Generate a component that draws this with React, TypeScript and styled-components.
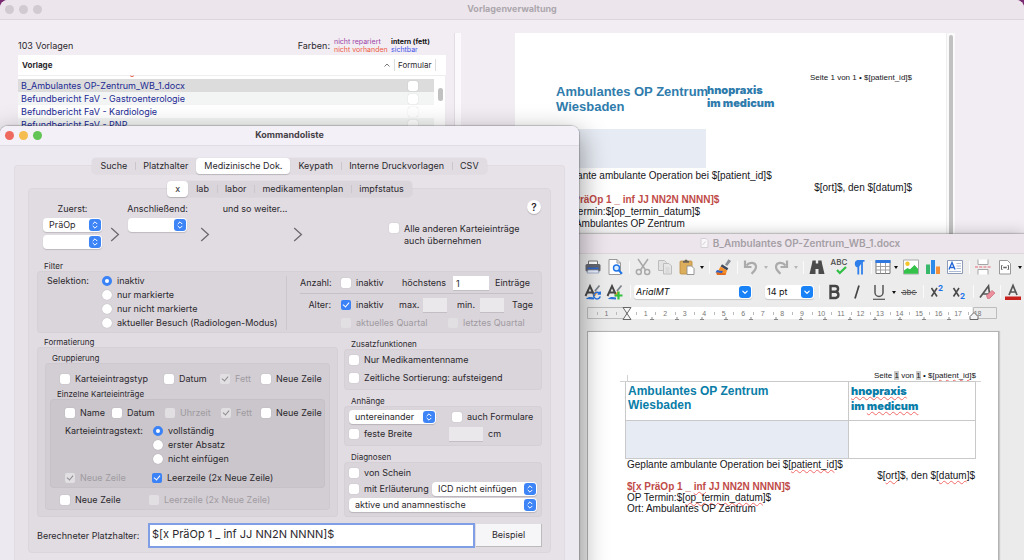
import React from "react";
import styled, { createGlobalStyle, css } from "styled-components";

const UI = '"Inter", "Liberation Sans", sans-serif';
const ARIAL = '"Liberation Sans", Arial, sans-serif';

const GlobalStyle = createGlobalStyle`
  *, *::before, *::after { box-sizing: border-box; }
  body { margin: 0; font: 9px/12px ${UI}; color: #2b282d; }
  h1, h2, h3, p { margin: 0; font: inherit; }
  button, input, select { font: inherit; color: inherit; margin: 0; padding: 0; border: 0; }
`;

/* ---------- Desktop and windows ---------- */

const Desktop = styled.div`
  position: relative;
  height: 100vh;
  overflow: hidden;
  background: #7a2a70;
`;

const TitleBar = styled.header<{ $tone: string; $line: string }>`
  display: grid;
  grid-template-columns: 1fr auto 1fr;
  align-items: center;
  height: 20px;
  padding: 0 5px 1px;
  background: ${(p) => p.$tone};
  border-bottom: 1px solid ${(p) => p.$line};
`;

const Lights = styled.div`
  display: flex;
  gap: 5px;
`;

const Light = styled.button<{ $color: string }>`
  width: 9px;
  height: 9px;
  border-radius: 50%;
  background: ${(p) => p.$color};
`;

const WindowTitle = styled.h1<{ $color: string; $large?: boolean }>`
  display: flex;
  align-items: center;
  gap: 4px;
  font-weight: ${(p) => (p.$large ? 600 : 700)};
  font-size: ${(p) => (p.$large ? 10 : 9)}px;
  white-space: nowrap;
  color: ${(p) => p.$color};
`;

/* ---------- Template manager ---------- */

const ManagerWindow = styled.main`
  display: flex;
  flex-direction: column;
  height: 100%;
  background: #f2edf3;
  border-radius: 8px 8px 0 0;
  overflow: hidden;
`;

const ManagerBody = styled.div`
  flex: 1;
  display: grid;
  grid-template-columns: 428px 7px 1fr;
  column-gap: 8px;
  padding: 13px 69px 0 18px;
`;

const Splitter = styled.div`
  background: #fbf9fb;
  border-left: 1px solid #e2dde3;
`;

const ListPane = styled.section`
  padding-top: 3px;
`;

const ListHead = styled.div`
  display: flex;
  align-items: center;
  height: 19px;
`;

const Legend = styled.div`
  display: grid;
  grid-template-columns: 57px 55px;
  margin-left: 4px;
  font-size: 7px;
  line-height: 8px;
`;

const LegendHint = styled.span<{ $color: string; $bold?: boolean }>`
  color: ${(p) => p.$color};
  font-weight: ${(p) => (p.$bold ? 700 : 400)};
  white-space: nowrap;
`;

const Push = styled.span`
  margin-left: auto;
`;

const TemplateTable = styled.table`
  display: block;
  background: #fff;
  thead, tbody { display: block; }
  thead { border-bottom: 1px solid #eee; }
  tr { display: grid; grid-template-columns: 1fr 42px; align-items: center; }
  th, td { padding: 0; text-align: left; font-weight: 400; }
  thead tr { height: 20px; padding-right: 10px; }
  tbody { position: relative; padding: 3px 11px 0 0; border-right: 1px solid #eee; }
`;

const SortHead = styled.th`
  display: flex;
  justify-content: space-between;
  align-items: center;
  && { padding: 0 4px; font-weight: 700; font-size: 8px; }
`;

const FormHead = styled.th`
  && { padding-left: 3px; font-size: 8px; }
  border-left: 1px solid #ddd;
  border-right: 1px solid #ddd;
`;

const TemplateRow = styled.tr<{ $bg: string }>`
  height: 13px;
  background: ${(p) => p.$bg};
  color: #1c2a94;
  white-space: nowrap;
  td:first-child { padding-left: 3px; }
  td:last-child { display: flex; justify-content: center; }
`;

const ListThumb = styled.tr`
  && { display: block; }
  position: absolute;
  right: 2px;
  top: 12px;
  width: 5px;
  height: 13px;
  border-radius: 3px;
  background: #c1c1c1;
`;

const ScrolledOff = styled.tr`
  && { display: block; }
  position: absolute;
  left: 112px;
  top: -1px;
  width: 4px;
  height: 2px;
  border-bottom: 1px solid #e8503c;
  border-radius: 0 0 2px 2px;
`;

const PreviewPane = styled.section`
  display: grid;
  grid-template-columns: 1fr 9px;
  margin-left: 46px;
`;

const PreviewPage = styled.article`
  padding: 39px 34px 0 41px;
  background: #fff;
  font: 10px/12px ${ARIAL};
  color: #16161a;
  white-space: nowrap;
`;

const ScrollTrack = styled.div`
  padding: 2px 2px 0;
  background: #fafafa;
  border-left: 1px solid #eee;
  &::before { content: ""; display: block; height: 100%; border-radius: 3px; background: #c1c1c1; }
`;

const PageNo = styled.p`
  text-align: right;
  font-size: 8px;
`;

const PreviewBrand = styled.div`
  display: grid;
  grid-template-columns: 151px 1fr;
  height: 45px;
`;

const Clinic = styled.h2<{ $color: string; $size: number; $lead: number }>`
  font: 700 ${(p) => p.$size}px/${(p) => p.$lead}px ${ARIAL};
  color: ${(p) => p.$color};
`;

const Practice = styled.h2<{ $color: string; $lead: number }>`
  font: 900 11px/${(p) => p.$lead}px ${UI};
  color: ${(p) => p.$color};
`;

const PreviewBox = styled.div`
  width: 150px;
  height: 39px;
  margin-bottom: 2px;
  background: #e7ebf3;
`;

const RightLine = styled.p`
  text-align: right;
`;

const RedLine = styled.p`
  font-weight: 700;
  color: #bf4b48;
`;

/* ---------- Command list dialog ---------- */

const Dialog = styled.section`
  position: absolute;
  left: 0;
  top: 126px;
  z-index: 3;
  width: 579px;
  background: #ece9f0;
  border-radius: 8px;
  overflow: hidden;
`;

const DialogShadow = styled.div`
  position: absolute;
  left: 0;
  top: 126px;
  z-index: 2;
  width: 579px;
  bottom: -20px;
  border-radius: 8px;
  box-shadow: 0 0 1px 1px rgba(0, 0, 0, 0.2), 0 10px 26px 4px rgba(0, 0, 0, 0.34);
`;

const DialogBody = styled.div`
  padding: 12px 14px 20px;
`;

const TabBar = styled.nav<{ $bg: string }>`
  position: relative;
  display: flex;
  width: max-content;
  height: 16px;
  margin: 0 auto -9px;
  border-radius: 4px;
  background: ${(p) => p.$bg};
  box-shadow: 0 0 0 1px rgba(0, 0, 0, 0.02);
`;

const Tab = styled.button<{ $active?: boolean }>`
  position: relative;
  padding: 0 8px;
  background: none;
  border-radius: 4px;
  white-space: nowrap;
  & + &::before {
    content: "";
    position: absolute;
    left: 0;
    top: 4px;
    width: 1px;
    height: 8px;
    background: #cbc6cd;
  }
  ${(p) =>
    p.$active &&
    css`
      background: #fff;
      box-shadow: 0 1px 1px rgba(0, 0, 0, 0.18);
      z-index: 1;
      &&::before { display: none; }
      & + button::before { display: none; }
    `}
`;

const OuterPanel = styled.div`
  padding: 16px 14px 20px;
  background: #e6e2e8;
  border-radius: 4px;
  box-shadow: inset 0 0 0 1px #e0dce2;
`;

const InnerPanel = styled.div`
  padding: 11px 8px 4px;
  background: #e1dce2;
  border: 1px solid #dbd6dc;
  border-radius: 4px;
`;

const Chain = styled.div`
  display: grid;
  grid-template-columns: 59px 26px 59px 36px 64px 22px 1fr;
  height: 50px;
  margin-bottom: 11px;
  padding-left: 6px;
`;

const ChainStep = styled.div`
  display: flex;
  flex-direction: column;
  align-items: center;
  gap: 3px;
  padding-top: 3px;
  white-space: nowrap;
`;

const ChainArrow = styled.svg`
  justify-self: center;
  margin-top: 27px;
  fill: none;
  stroke: #6d6a70;
`;

const ChainSide = styled.div`
  display: flex;
  flex-direction: column;
  gap: 9px;
  padding-left: 80px;
`;

const HelpButton = styled.button`
  align-self: flex-end;
  width: 14px;
  height: 14px;
  margin-right: 1px;
  border-radius: 50%;
  background: #fff;
  font-weight: 600;
  font-size: 10px;
  box-shadow: 0 1px 1px rgba(0, 0, 0, 0.2);
`;

const SelectWrap = styled.span<{ $w: string }>`
  position: relative;
  display: block;
  width: ${(p) => p.$w};
  height: 14px;
  svg { position: absolute; right: 1px; top: 1px; pointer-events: none; }
`;

const SelectBox = styled.select`
  appearance: none;
  display: block;
  width: 100%;
  height: 14px;
  padding: 0 14px 0 6px;
  border-radius: 4px;
  background: #fff;
  box-shadow: 0 1px 1px rgba(0, 0, 0, 0.16);
`;

const Check = styled.label<{ $off?: boolean; $top?: boolean }>`
  display: flex;
  align-items: ${(p) => (p.$top ? "flex-start" : "center")};
  gap: 5px;
  min-height: 14px;
  white-space: nowrap;
  color: ${(p) => (p.$off ? "#9f9ba1" : "inherit")};
`;

const Tick = styled.input`
  appearance: none;
  position: relative;
  flex: none;
  width: 10px;
  height: 10px;
  border-radius: 2px;
  background: #fff;
  box-shadow: 0 0 1px rgba(0, 0, 0, 0.25);
  &:disabled { background: #e2dfe3; box-shadow: none; }
  &:checked:not(:disabled) { background: #3b82f6; box-shadow: none; }
  &:checked::before {
    content: "";
    position: absolute;
    left: 3px;
    top: 1px;
    width: 4px;
    height: 6px;
    border: solid #fff;
    border-width: 0 1px 1px 0;
    transform: rotate(40deg);
  }
  &:checked:disabled::before { border-color: #8f8b91; }
`;

const Dot = styled.input`
  appearance: none;
  flex: none;
  width: 10px;
  height: 10px;
  border-radius: 50%;
  background: #fff;
  box-shadow: 0 0 1px rgba(0, 0, 0, 0.3);
  &:checked { border: 3px solid #3b82f6; box-shadow: none; }
`;

const GroupTitle = styled.h3`
  padding-left: 7px;
  font-size: 8px;
  line-height: 10px;
`;

const Caption = styled(GroupTitle)`
  margin-top: 3px;
`;

const Box = styled.div<{ $bg: string; $pad: string; $gap?: number }>`
  display: flex;
  flex-direction: column;
  gap: ${(p) => p.$gap || 0}px;
  padding: ${(p) => p.$pad};
  background: ${(p) => p.$bg};
  border-radius: 4px;
  box-shadow: inset 0 0 0 1px rgba(90, 70, 90, 0.04);
`;

const FilterBox = styled.div`
  display: grid;
  grid-template-columns: 55px 184px 1fr;
  height: 62px;
  padding: 3px 10px;
  margin-bottom: 4px;
  background: #dad5db;
  border-radius: 4px;
  box-shadow: inset 0 0 0 1px rgba(90, 70, 90, 0.04);
`;

const FieldName = styled.span<{ $right?: boolean }>`
  line-height: 14px;
  white-space: nowrap;
  text-align: ${(p) => (p.$right ? "right" : "left")};
`;

const LimitBlock = styled.div`
  display: flex;
  flex-direction: column;
  margin: 2px 0;
  padding-left: 13px;
  border-left: 1px solid #cbc6cc;
`;

const LimitRow = styled.div<{ $cols: string }>`
  display: grid;
  grid-template-columns: ${(p) => p.$cols};
  align-items: center;
  height: 14px;
  white-space: nowrap;
`;

const Rule = styled.hr`
  width: 100%;
  height: 1px;
  margin: 3px 0 4px;
  border: 0;
  background: #c6c1c7;
`;

const NumberInput = styled.input<{ $w: number }>`
  width: ${(p) => p.$w}px;
  height: 14px;
  && { padding: 0 3px; }
  background: #fff;
  border-radius: 0;
  box-shadow: 0 1px 0 #c3bec4;
  &:disabled { background: #ebe8ec; }
`;

const Columns = styled.div`
  display: grid;
  grid-template-columns: 301px 1fr;
  column-gap: 6px;
`;

const SideColumn = styled.div`
  display: flex;
  flex-direction: column;
  gap: 6px;
  padding-top: 2px;
`;

const CellRow = styled.div<{ $cols: string; $mt?: number }>`
  display: grid;
  grid-template-columns: ${(p) => p.$cols};
  align-items: center;
  min-height: 14px;
  margin-top: ${(p) => p.$mt || 0}px;
`;

const QuarterCell = styled.div`
  padding-left: 41px;
`;

const Indent = styled.div`
  padding-left: 10px;
`;

const TopCell = styled.span`
  align-self: start;
  line-height: 14px;
  white-space: nowrap;
`;

const Stack = styled.div`
  display: flex;
  flex-direction: column;
`;

const ResultRow = styled.div`
  display: grid;
  grid-template-columns: 111px 1fr 67px;
  align-items: center;
  height: 25px;
  margin-top: 6px;
  label { white-space: nowrap; }
`;

const ResultInput = styled.input`
  width: 100%;
  height: 25px;
  && { border: 2px solid #7f9ee6; padding: 0 2px 4px; font-size: 11px; }
  background: #fff;
  outline: none;
`;

const SampleButton = styled.button`
  height: 23px;
  margin-left: 1px;
  background: #f6f5f7;
  && { border-right: 1px solid #bbb; border-bottom: 1px solid #bbb; }
`;

/* ---------- Word processor ---------- */

const WriterWindow = styled.section`
  position: absolute;
  left: 576px;
  right: 0;
  top: 234px;
  bottom: 0;
  z-index: 1;
  display: flex;
  flex-direction: column;
  background: #ebebeb;
  box-shadow: 0 0 1px 1px rgba(0, 0, 0, 0.16), 0 0 14px rgba(0, 0, 0, 0.24);
`;

const Toolbar = styled.div<{ $h: number }>`
  display: flex;
  align-items: center;
  flex: none;
  height: ${(p) => p.$h}px;
  padding-left: 6px;
  background: #ececec;
`;

const Tool = styled.button<{ $w?: number }>`
  display: flex;
  align-items: center;
  justify-content: center;
  flex: none;
  width: ${(p) => p.$w || 22}px;
  height: 22px;
  background: none;
`;

const Sep = styled.span<{ $w?: number }>`
  flex: none;
  width: ${(p) => p.$w || 6}px;
  height: 13px;
  background: linear-gradient(#fafafa, #fafafa) center / 1px 100% no-repeat;
`;

const CaretButton = styled.button<{ $soft?: boolean }>`
  flex: none;
  width: 8px;
  height: 12px;
  background: none;
  &::before {
    content: "";
    display: block;
    width: 0;
    margin: 1px auto 0;
    border: solid transparent;
    border-width: 3px 2px 0;
    border-top-color: ${(p) => (p.$soft ? "#b5b5b5" : "#111")};
  }
`;

const ComboGroup = styled.div`
  display: flex;
  flex: none;
  gap: 13px;
`;

const Combo = styled.span<{ $w: number; $italic?: boolean }>`
  position: relative;
  flex: none;
  width: ${(p) => p.$w}px;
  font-style: ${(p) => (p.$italic ? "italic" : "normal")};
  svg { position: absolute; right: 1px; top: 1px; pointer-events: none; }
  select {
    appearance: none;
    display: block;
    width: 100%;
    height: 14px;
    padding-left: 2px;
    border-radius: 3px;
    background: #fff;
    color: #111;
    box-shadow: 0 1px 1px rgba(0, 0, 0, 0.16);
  }
`;

const RulerBar = styled.div`
  position: relative;
  display: flex;
  align-items: center;
  flex: none;
  height: 12px;
  margin: 4px 27px 0 11px;
  font: 7px/9px ${ARIAL};
  color: #777;
  background: linear-gradient(90deg, #ececec 0 10%, #fff 10% 94%, #ececec 94%);
  svg { position: absolute; left: 0; top: 0; }
`;

const RulerCell = styled.span<{ $half?: boolean }>`
  flex: ${(p) => (p.$half ? 1 : 2)};
  display: grid;
  grid-template-columns: 1fr auto 1fr;
  align-items: center;
  ${(p) => !p.$half && css`&::before { content: ""; width: 1px; height: 3px; background: #bbb; }`}
`;

const Canvas = styled.div`
  flex: 1;
  display: flex;
  padding: 12px 25px 0 11px;
`;

const Paper = styled.article`
  flex: 1;
  padding: 38px 22px 0 37px;
  background: #fff;
  border: solid #b3b3b3;
  border-width: 1px 1px 0;
  box-shadow: 1px 0 1px rgba(0, 0, 0, 0.15);
  font: 10px/11px ${ARIAL};
  color: #16161a;
  white-space: nowrap;
`;

const LetterGrid = styled.div`
  position: relative;
  display: grid;
  grid-template-columns: 222px 1fr;
  grid-template-rows: 38px 37px;
  gap: 1px;
  padding: 1px;
  background: #c9c9c9;
  &::before {
    content: "";
    position: absolute;
    left: -5px;
    top: -6px;
    width: 8px;
    height: 7px;
    border: solid #d2d2d2;
    border-width: 0 1px 1px 0;
  }
  &::after {
    content: "";
    position: absolute;
    right: -5px;
    top: 0;
    width: 5px;
    height: 1px;
    background: #d2d2d2;
  }
`;

const LetterCell = styled.div<{ $fill?: boolean }>`
  padding: 2px;
  background: ${(p) => (p.$fill ? "#e7ebf4" : "#fff")};
`;

const PaperText = styled.div`
  padding: 0 1px 0 2px;
`;

const Wavy = styled.span`
  text-decoration: underline wavy #f26a6a 1px;
  text-underline-offset: 1px;
  text-decoration-skip-ink: none;
`;

const FieldMark = styled.span`
  background: #c8c8c8;
`;

/* ---------- Small pieces ---------- */

const Picker = ({ value, w, label }: { value: string; w: string; label: string }) => (
  <SelectWrap $w={w}>
    <SelectBox aria-label={label} defaultValue={value}>
      <option value={value}>{value}</option>
    </SelectBox>
    <svg width="12" height="12" viewBox="0 0 12 12" fill="none" stroke="#fff" strokeLinecap="round" strokeLinejoin="round">
      <rect width="12" height="12" rx="3" fill="#3d84f7" stroke="none" />
      <path d="M4 4.8 6 2.8l2 2M4 7.2l2 2 2-2" />
    </svg>
  </SelectWrap>
);

const ComboBox = ({ value, w, italic, label }: { value: string; w: number; italic?: boolean; label: string }) => (
  <Combo $w={w} $italic={italic}>
    <select aria-label={label} defaultValue={value}>
      <option value={value}>{value}</option>
    </select>
    <svg width="12" height="12" viewBox="0 0 12 12" fill="none" stroke="#fff" strokeLinecap="round" strokeLinejoin="round">
      <rect width="12" height="12" rx="3" fill="#1a82f7" stroke="none" />
      <path d="m3.8 5.2 2.2 2.2 2.2-2.2" strokeWidth="1.2" />
    </svg>
  </Combo>
);

const CheckField = ({ text, on, off }: { text: string; on?: boolean; off?: boolean }) => (
  <Check $off={off}>
    <Tick type="checkbox" defaultChecked={on} disabled={off} />
    {text}
  </Check>
);

const RadioField = ({ text, group, on }: { text: string; group: string; on?: boolean }) => (
  <Check>
    <Dot type="radio" name={group} defaultChecked={on} />
    {text}
  </Check>
);

const Arrow = () => (
  <ChainArrow width="10" height="15" viewBox="0 0 10 15" strokeWidth="1.3">
    <path d="M1.2 1 8.4 7.5 1.2 14" />
  </ChainArrow>
);

const icon = { width: 18, height: 18, viewBox: "0 0 18 18", fill: "none" };

const PrinterIcon = () => (
  <svg {...icon}>
    <path d="M4.5 3h9v4h-9z" fill="#fff" stroke="#777" />
    <rect x="1.5" y="6" width="15" height="7.5" rx="1.5" fill="#63666d" />
    <path d="M3.5 9.5h11V11h-11z" fill="#2f66d0" />
    <path d="M4 12h10l1 3H3z" fill="#e8eefc" stroke="#8795b5" strokeWidth=".7" />
  </svg>
);
const PreviewIcon = () => (
  <svg {...icon}>
    <path d="M3 1.5h8l3.500 3.500v11.500H3z" fill="#fff" stroke="#999" />
    <path d="M11 1.500V5h3.500" stroke="#999" />
    <circle cx="10.500" cy="10" r="3" fill="#dcecff" stroke="#1d74e8" strokeWidth="1.4" />
    <path d="m12.800 12.400 3.200 3.400" stroke="#1d74e8" strokeWidth="2" />
  </svg>
);
const CutIcon = () => (
  <svg {...icon} stroke="#a9a9a9" strokeWidth="1.5">
    <path d="M4 1 11.500 12M14 1 6.500 12" />
    <circle cx="4.800" cy="14" r="2.500" />
    <circle cx="13.200" cy="14" r="2.500" />
  </svg>
);
const CopyIcon = () => (
  <svg {...icon} stroke="#bcbcbc">
    <path d="M2.500 2.500h6l2 2v8h-8z" fill="#e2e2e2" />
    <path d="M7.500 5.500h5.500l2.500 2.500v8h-8z" fill="#e6e6e6" />
    <path d="M9.500 10h4M9.500 12h4M9.500 14h4" stroke="#cfcfcf" />
  </svg>
);
const PasteIcon = () => (
  <svg {...icon}>
    <rect x="2" y="3" width="12" height="13" rx="1" fill="#dcae5c" stroke="#b98a3c" strokeWidth=".8" />
    <path d="M5 4.800V3h1.500a1.500 1.500 0 0 1 3 0H11v1.800z" fill="#6b6358" />
    <path d="M9 8h4.500L16 10.500v6H9z" fill="#fff" stroke="#8d8d8d" strokeWidth=".9" />
  </svg>
);
const BrushIcon = () => (
  <svg {...icon}>
    <path d="m11 6.500 3.500-5.200 2.500 1.800-3.800 5z" fill="#8a8f98" />
    <path d="m8 6.300 6.300 4-1.300 2.200-6.400-4z" fill="#3f4a5e" />
    <path d="m6.600 8.500 6.400 4-1.200 4-9-1.500z" fill="#f4902c" />
    <path d="M3 12c2 .5 4 1 6 1l-1 2-6.500-.5z" fill="#2c61c9" />
    <path d="m2 14.500 10 1-.5 1.500H3z" fill="#e06a1e" />
  </svg>
);
const UndoIcon = ({ flip }: { flip?: boolean }) => (
  <svg {...icon} stroke="#ababab" strokeWidth="2.200">
    <g transform={flip ? "matrix(-1 0 0 1 18 0)" : undefined}>
      <path d="M4.500 7.500c3-4 9-3.500 9.500 1 .3 3-2 5-4.500 7.300" />
      <path d="M3 2.500v6.500h6.500" />
    </g>
  </svg>
);
const FindIcon = () => (
  <svg {...icon} fill="#4b4b4b">
    <path d="M4.500 2.500h3.300v3h2.400v-3h3.300l.5 3L16.500 16h-6v-5h-3v5h-6L4 5.500z" />
  </svg>
);
const SpellIcon = () => (
  <svg {...icon} overflow="visible">
    <text x="9" y="7" textAnchor="middle" fontFamily="Inter, sans-serif" fontSize="8" fontWeight="500" fill="#4a4a4a">ABC</text>
    <path d="m7 12 2.800 3L16 9" stroke="#2fbf43" strokeWidth="2.200" />
  </svg>
);
const PilcrowIcon = () => (
  <svg {...icon}>
    <path d="M8.500 9.500a3.700 3.700 0 0 1 0-7.400H14" fill="#2f7fea" />
    <path d="M8.300 2.800v13.700M12 2.800v13.700M7.500 2.800h7" stroke="#2f7fea" strokeWidth="1.800" />
  </svg>
);
const TableIcon = () => (
  <svg {...icon}>
    <path d="M2 2.500h14v13H2z" fill="#fff" stroke="#777" />
    <path d="M1.500 2h15v3h-15z" fill="#2f78e0" />
    <path d="M2 8.500h14M2 12h14M6.500 5v10.500M11.500 5v10.500" stroke="#999" strokeWidth=".9" />
  </svg>
);
const ImageIcon = () => (
  <svg {...icon}>
    <path d="M1.500 2h15v14h-15z" fill="#fff" stroke="#aaa" />
    <circle cx="5.500" cy="5.800" r="2.200" fill="#f6c326" />
    <path d="m2 15.500V13l3.500-2.500 2.500 1L12.500 7l3.500 4v4.500z" fill="#35c24a" />
    <path d="M2 15.500v-3l3.500-2.500 2.500 1.500L12.500 7.500 16 11v4.500z" fill="#35c24a" />
  </svg>
);
const ChartIcon = () => (
  <svg {...icon}>
    <path d="M2 6.500h4V16H2z" fill="#37b86b" />
    <path d="M7 2h4v14H7z" fill="#2f8bea" />
    <path d="M12 8.500h4V16h-4z" fill="#f2913a" />
  </svg>
);
const TextBoxIcon = () => (
  <svg {...icon}>
    <path d="M1.500 2.500h15v13h-15z" fill="#fff" stroke="#8d9db8" />
    <path d="M3 11.500 6 4.500l3 7M4 9.500h4" stroke="#2467d6" strokeWidth="1.400" />
    <path d="M10.500 5.500H15M10.500 8H15M10.500 10.500H15M3 13.500h12" stroke="#98aacb" strokeWidth=".8" />
  </svg>
);
const BreakIcon = () => (
  <svg {...icon} stroke="#a5a5a5">
    <path d="M4 1.500v5h10v-5M4 16.500v-5h10v5" fill="#fff" />
    <path d="M1 9h16" stroke="#e66a76" strokeWidth="1.200" strokeDasharray="3 1.200" />
  </svg>
);
const FieldIcon = () => (
  <svg {...icon} stroke="#999">
    <path d="M3.500 2.500h8l3 3v10.500h-11z" fill="#fff" />
    <path d="M6.500 7.500H5.500v4h1M11.500 7.500h1v4h-1M7.500 9.500h3M8 8.500v2M10 8.500v2" stroke="#666" />
  </svg>
);
const StyleIcon = ({ add }: { add?: boolean }) => (
  <svg {...icon}>
    <path d="M1.500 13 6 3l4.500 10M3.400 9.500h5.200" stroke="#474747" strokeWidth="1.900" />
    <path d="m11 8 4.500-5.500" stroke="#7f858d" strokeWidth="1.800" />
    <path d="M8.500 12.500 11.500 8l2 1.500-2 3z" fill="#ef9a3a" />
    <path d="M2 16c2-2.500 5-2 8-1.500V16.500z" fill="#2c73da" />
    {add ? (
      <path d="M12.500 8.500v8M8.500 12.500h8" stroke="#35c13f" strokeWidth="2.200" />
    ) : (
      <path d="M15.500 10.500a3.300 3.300 0 1 0 .7 2.800M16.200 8.500v2.500h-2.500" stroke="#2374e3" strokeWidth="1.500" />
    )}
  </svg>
);
const BoldIcon = () => (
  <svg {...icon} stroke="#444" strokeWidth="2.400">
    <path d="M4.500 3h4.700a2.800 2.800 0 0 1 0 5.700H4.500zM4.500 8.700h5.300a3.200 3.200 0 0 1 0 6.300H4.500z" />
  </svg>
);
const ItalicIcon = () => (
  <svg {...icon} stroke="#444" strokeWidth="1.700">
    <path d="M11 2.500 7 15.500" />
  </svg>
);
const UnderlineIcon = () => (
  <svg {...icon} stroke="#555">
    <path d="M5 2v7.500a4 4 0 0 0 8 0V2" strokeWidth="1.500" />
    <path d="M3 16.300h12" strokeWidth="1.200" />
  </svg>
);
const StrikeIcon = () => (
  <svg {...icon}>
    <text x="9" y="12" textAnchor="middle" fontFamily="Inter, sans-serif" fontSize="8" fill="#555">abc</text>
    <path d="M1 9.500h16" stroke="#555" />
  </svg>
);
const ScriptIcon = ({ sub }: { sub?: boolean }) => (
  <svg {...icon}>
    <path d="m3.500 5 5.500 8.500M9 5 3.500 13.500" stroke="#4a4a4a" strokeWidth="1.600" />
    <text x="10" y={sub ? 16 : 8} fontFamily="Inter, sans-serif" fontSize="8" fontWeight="700" fill="#1d74e8">2</text>
  </svg>
);
const EraserIcon = () => (
  <svg {...icon}>
    <path d="M2 14.500 10.500 3l1.500 11.500M5 11h6.500" stroke="#555" strokeWidth="1.700" />
    <path d="m8.500 12.500 5.500-5 3 2.500-5.500 5.500h-2z" fill="#ee8f9d" stroke="#c76a78" strokeWidth=".7" />
  </svg>
);
const FontColorIcon = () => (
  <svg {...icon}>
    <path d="M5 12 9 2.500 13 12M6.300 9h5.400" stroke="#555" strokeWidth="1.700" />
    <path d="M1 13.500h16V17H1z" fill="#c9211e" />
  </svg>
);

const tabStops = [65, 90, 115, 139, 164, 189, 214, 238, 263, 288, 313, 337, 362];

const Ruler = () => (
  <RulerBar>
    <RulerCell $half />
    {["1", "", ...Array.from({ length: 18 }, (_, i) => String(i + 1))].map((n, i) => (
      <RulerCell key={i}>
        <span>{n}</span>
      </RulerCell>
    ))}
    <RulerCell $half />
    <svg width="410" height="14" fill="none">
      <path d="M.5 .5h39v11h-39zM386.500 .5h23v11h-23z" stroke="#bdbdbd" />
      <path d="M36 .500h8L36 12.500h8zM383 12.500v-3l4-4 4 4v3z" fill="#f4f4f4" stroke="#666" />
      {tabStops.map((x) => (
        <path key={x} d={`M${x - 2} 12.500h4M${x} 10v2`} stroke="#888" />
      ))}
    </svg>
  </RulerBar>
);

const rows = [
  { name: "B_Ambulantes OP-Zentrum_WB_1.docx", bg: "#dcdcdc" },
  { name: "Befundbericht FaV - Gastroenterologie", bg: "#f3f5f5" },
  { name: "Befundbericht FaV - Kardiologie", bg: "#fff" },
  { name: "Befundbericht FaV - PNP", bg: "#f3f5f5" },
];

const lights = (colors: string[]) => (
  <Lights>
    {colors.map((c, i) => (
      <Light key={i} $color={c} aria-label={["Schließen", "Minimieren", "Vergrößern"][i]} />
    ))}
  </Lights>
);

/* ---------- Screens ---------- */

const Manager = () => (
  <ManagerWindow>
    <TitleBar $tone="#ece6ec" $line="#dcd6dc">
      {lights(["#d1cbd1", "#d1cbd1", "#d1cbd1"])}
      <WindowTitle $color="#aca6ac">Vorlagenverwaltung</WindowTitle>
    </TitleBar>
    <ManagerBody>
      <ListPane>
        <ListHead>
          <span>103 Vorlagen</span>
          <Push>Farben:</Push>
          <Legend>
            <LegendHint $color="#9a3fa5">nicht repariert</LegendHint>
            <LegendHint $color="#111" $bold>intern (fett)</LegendHint>
            <LegendHint $color="#ee5a45">nicht vorhanden</LegendHint>
            <LegendHint $color="#3f55e8">sichtbar</LegendHint>
          </Legend>
        </ListHead>
        <TemplateTable>
          <thead>
            <tr>
              <SortHead>
                Vorlage
                <svg width="6" height="4" viewBox="0 0 6 4" fill="none" stroke="#777">
                  <path d="M.5 3.500 3 1l2.500 2.500" />
                </svg>
              </SortHead>
              <FormHead>Formular</FormHead>
            </tr>
          </thead>
          <tbody>
            {rows.map((r) => (
              <TemplateRow key={r.name} $bg={r.bg}>
                <td>{r.name}</td>
                <td>
                  <Tick type="checkbox" aria-label={r.name} />
                </td>
              </TemplateRow>
            ))}
            <ScrolledOff aria-hidden="true" />
            <ListThumb aria-hidden="true" />
          </tbody>
        </TemplateTable>
      </ListPane>
      <Splitter />
      <PreviewPane>
        <PreviewPage>
          <PageNo>Seite 1 von 1 • $[patient_id]$</PageNo>
          <PreviewBrand>
            <Clinic $color="#2f7cac" $size={13} $lead={15}>
              Ambulantes OP Zentrum
              <br />
              Wiesbaden
            </Clinic>
            <Practice $color="#2f7cac" $lead={13}>
              hnopraxis
              <br />
              im medicum
            </Practice>
          </PreviewBrand>
          <PreviewBox />
          <p>Geplante ambulante Operation bei $[patient_id]$</p>
          <RightLine>$[ort]$, den $[datum]$</RightLine>
          <RedLine>$[x PräOp 1 _ inf JJ NN2N NNNN]$</RedLine>
          <p>OP Termin:$[op_termin_datum]$</p>
          <p>Ort: Ambulantes OP Zentrum</p>
        </PreviewPage>
        <ScrollTrack />
      </PreviewPane>
    </ManagerBody>
  </ManagerWindow>
);

const CommandList = () => (
  <Dialog>
    <TitleBar $tone="#f4f0f7" $line="#e2dee5">
      {lights(["#ee6a5f", "#f5bd4f", "#61c454"])}
      <WindowTitle $color="#454148">Kommandoliste</WindowTitle>
    </TitleBar>
    <DialogBody>
      <TabBar $bg="#e0dce2">
        <Tab>Suche</Tab>
        <Tab>Platzhalter</Tab>
        <Tab $active>Medizinische Dok.</Tab>
        <Tab>Keypath</Tab>
        <Tab>Interne Druckvorlagen</Tab>
        <Tab>CSV</Tab>
      </TabBar>
      <OuterPanel>
        <TabBar $bg="#dad5db">
          <Tab $active>x</Tab>
          <Tab>lab</Tab>
          <Tab>labor</Tab>
          <Tab>medikamentenplan</Tab>
          <Tab>impfstatus</Tab>
        </TabBar>
        <InnerPanel>
          <Chain>
            <ChainStep>
              <span>Zuerst:</span>
              <Picker value="PräOp" w="59px" label="Zuerst" />
              <Picker value="" w="59px" label="Zuerst, zweiter Typ" />
            </ChainStep>
            <Arrow />
            <ChainStep>
              <span>Anschließend:</span>
              <Picker value="" w="59px" label="Anschließend" />
            </ChainStep>
            <Arrow />
            <ChainStep>
              <span>und so weiter...</span>
            </ChainStep>
            <Arrow />
            <ChainSide>
              <HelpButton>?</HelpButton>
              <Check $top>
                <Tick type="checkbox" />
                <span>
                  Alle anderen Karteieinträge
                  <br />
                  auch übernehmen
                </span>
              </Check>
            </ChainSide>
          </Chain>

          <GroupTitle>Filter</GroupTitle>
          <FilterBox>
            <FieldName>Selektion:</FieldName>
            <Stack>
              <RadioField group="selektion" text="inaktiv" on />
              <RadioField group="selektion" text="nur markierte" />
              <RadioField group="selektion" text="nur nicht markierte" />
              <RadioField group="selektion" text="aktueller Besuch (Radiologen-Modus)" />
            </Stack>
            <LimitBlock>
              <LimitRow $cols="31px 10px 61px 51px 42px 1fr">
                <FieldName $right>Anzahl:</FieldName>
                <span />
                <CheckField text="inaktiv" />
                <label htmlFor="max-count">höchstens</label>
                <NumberInput $w={36} id="max-count" defaultValue="1" />
                <span>Einträge</span>
              </LimitRow>
              <Rule />
              <LimitRow $cols="31px 10px 58px 24px 34px 23px 32px 1fr">
                <FieldName $right>Alter:</FieldName>
                <span />
                <CheckField text="inaktiv" on />
                <label htmlFor="age-max">max.</label>
                <NumberInput $w={24} id="age-max" disabled />
                <label htmlFor="age-min">min.</label>
                <NumberInput $w={24} id="age-min" disabled />
                <span>Tage</span>
              </LimitRow>
              <CellRow $cols="107px 1fr" $mt={4}>
                <QuarterCell>
                  <CheckField text="aktuelles Quartal" off />
                </QuarterCell>
                <QuarterCell>
                  <CheckField text="letztes Quartal" off />
                </QuarterCell>
              </CellRow>
            </LimitBlock>
          </FilterBox>

          <Columns>
            <div>
              <GroupTitle>Formatierung</GroupTitle>
              <Box $bg="#dad5db" $pad="6px 8px 7px">
                <GroupTitle>Gruppierung</GroupTitle>
                <Box $bg="#d3ced4" $pad="9px 5px 3px">
                  <Indent>
                    <CellRow $cols="104px 56px 41px 1fr">
                      <CheckField text="Karteieintragstyp" />
                      <CheckField text="Datum" />
                      <CheckField text="Fett" on off />
                      <CheckField text="Neue Zeile" />
                    </CellRow>
                  </Indent>
                  <Caption>Einzelne Karteieinträge</Caption>
                  <Box $bg="#cac6cb" $pad="7px 0 3px 15px">
                    <CellRow $cols="47px 53px 56px 40px 1fr">
                      <CheckField text="Name" />
                      <CheckField text="Datum" />
                      <CheckField text="Uhrzeit" off />
                      <CheckField text="Fett" on off />
                      <CheckField text="Neue Zeile" />
                    </CellRow>
                    <CellRow $cols="88px 1fr" $mt={4}>
                      <TopCell>Karteieintragstext:</TopCell>
                      <Stack>
                        <RadioField group="text" text="vollständig" on />
                        <RadioField group="text" text="erster Absatz" />
                        <RadioField group="text" text="nicht einfügen" />
                      </Stack>
                    </CellRow>
                    <CellRow $cols="87px 1fr" $mt={5}>
                      <CheckField text="Neue Zeile" on off />
                      <CheckField text="Leerzeile (2x Neue Zeile)" on />
                    </CellRow>
                  </Box>
                  <Indent>
                    <CellRow $cols="89px 1fr" $mt={5}>
                      <CheckField text="Neue Zeile" />
                      <CheckField text="Leerzeile (2x Neue Zeile)" off />
                    </CellRow>
                  </Indent>
                </Box>
              </Box>
            </div>
            <SideColumn>
              <div>
                <GroupTitle>Zusatzfunktionen</GroupTitle>
                <Box $bg="#dad5db" $pad="4px 5px 5px" $gap={4}>
                  <CheckField text="Nur Medikamentenname" />
                  <CheckField text="Zeitliche Sortierung: aufsteigend" />
                </Box>
              </div>
              <div>
                <GroupTitle>Anhänge</GroupTitle>
                <Box $bg="#dad5db" $pad="4px 5px 5px" $gap={3}>
                  <CellRow $cols="103px 1fr">
                    <Picker value="untereinander" w="87px" label="Anhänge" />
                    <CheckField text="auch Formulare" />
                  </CellRow>
                  <CellRow $cols="100px 39px 1fr">
                    <CheckField text="feste Breite" />
                    <NumberInput $w={34} id="width-cm" disabled />
                    <label htmlFor="width-cm">cm</label>
                  </CellRow>
                </Box>
              </div>
              <div>
                <GroupTitle>Diagnosen</GroupTitle>
                <Box $bg="#dad5db" $pad="4px 5px 5px" $gap={2}>
                  <CheckField text="von Schein" />
                  <CellRow $cols="83px 1fr">
                    <CheckField text="mit Erläuterung" />
                    <Picker value="ICD nicht einfügen" w="100%" label="ICD" />
                  </CellRow>
                  <Picker value="aktive und anamnestische" w="100%" label="Diagnosen" />
                </Box>
              </div>
            </SideColumn>
          </Columns>

          <ResultRow>
            <label htmlFor="placeholder">Berechneter Platzhalter:</label>
            <ResultInput id="placeholder" defaultValue="$[x PräOp 1 _ inf JJ NN2N NNNN]$" />
            <SampleButton>Beispiel</SampleButton>
          </ResultRow>
        </InnerPanel>
      </OuterPanel>
    </DialogBody>
  </Dialog>
);

const Writer = () => (
  <WriterWindow>
    <TitleBar $tone="#ece5ec" $line="#ddd6dd">
      <span />
      <WindowTitle $color="#a59fa5" $large>
        <svg width="9" height="10" viewBox="0 0 9 10" fill="#f8f6f8" stroke="#d5d0d5">
          <path d="M1 .5h5l2 2v7H1z" />
          <path d="m2.500 7 3-3.500" />
        </svg>
        B_Ambulantes OP-Zentrum_WB_1.docx
      </WindowTitle>
    </TitleBar>
    <Toolbar $h={26}>
      <Tool aria-label="Drucken"><PrinterIcon /></Tool>
      <Tool aria-label="Druckvorschau"><PreviewIcon /></Tool>
      <Sep />
      <Tool aria-label="Ausschneiden"><CutIcon /></Tool>
      <Tool aria-label="Kopieren"><CopyIcon /></Tool>
      <Tool aria-label="Einfügen"><PasteIcon /></Tool>
      <CaretButton aria-label="Einfügen als" />
      <Sep />
      <Tool aria-label="Format übertragen"><BrushIcon /></Tool>
      <Sep />
      <Tool aria-label="Rückgängig"><UndoIcon /></Tool>
      <CaretButton $soft aria-label="Rückgängig-Liste" />
      <Tool aria-label="Wiederholen"><UndoIcon flip /></Tool>
      <CaretButton $soft aria-label="Wiederholen-Liste" />
      <Sep />
      <Tool aria-label="Suchen"><FindIcon /></Tool>
      <Tool aria-label="Rechtschreibung"><SpellIcon /></Tool>
      <Tool $w={18} aria-label="Formatierungszeichen"><PilcrowIcon /></Tool>
      <Sep />
      <Tool $w={18} aria-label="Tabelle"><TableIcon /></Tool>
      <CaretButton aria-label="Tabellengröße" />
      <Tool aria-label="Bild"><ImageIcon /></Tool>
      <Tool aria-label="Diagramm"><ChartIcon /></Tool>
      <Tool aria-label="Textfeld"><TextBoxIcon /></Tool>
      <Sep />
      <Tool aria-label="Seitenumbruch"><BreakIcon /></Tool>
      <Tool aria-label="Feldbefehl"><FieldIcon /></Tool>
      <CaretButton aria-label="Feldliste" />
    </Toolbar>
    <Toolbar $h={23}>
      <Tool aria-label="Vorlage aktualisieren"><StyleIcon /></Tool>
      <Tool aria-label="Neue Vorlage"><StyleIcon add /></Tool>
      <Sep $w={8} />
      <ComboGroup>
        <ComboBox value="ArialMT" w={118} italic label="Schriftart" />
        <ComboBox value="14 pt" w={49} label="Schriftgröße" />
      </ComboGroup>
      <Sep $w={10} />
      <Tool aria-label="Fett"><BoldIcon /></Tool>
      <Tool aria-label="Kursiv"><ItalicIcon /></Tool>
      <Tool aria-label="Unterstrichen"><UnderlineIcon /></Tool>
      <CaretButton aria-label="Unterstreichungsart" />
      <Tool aria-label="Durchgestrichen"><StrikeIcon /></Tool>
      <Sep />
      <Tool aria-label="Hochgestellt"><ScriptIcon /></Tool>
      <Tool aria-label="Tiefgestellt"><ScriptIcon sub /></Tool>
      <Sep />
      <Tool aria-label="Formatierung löschen"><EraserIcon /></Tool>
      <Sep $w={4} />
      <Tool aria-label="Schriftfarbe"><FontColorIcon /></Tool>
    </Toolbar>
    <Ruler />
    <Canvas>
      <Paper>
        <PageNo>
          Seite <FieldMark>1</FieldMark> von <FieldMark>1</FieldMark> • $[<Wavy>patient_id</Wavy>]$
        </PageNo>
        <LetterGrid>
          <LetterCell>
            <Clinic $color="#0a7da8" $size={12} $lead={14}>
              Ambulantes OP Zentrum
              <br />
              Wiesbaden
            </Clinic>
          </LetterCell>
          <LetterCell>
            <Practice $color="#0a7da8" $lead={15}>
              <Wavy>hnopraxis</Wavy>
              <br />
              im <Wavy>medicum</Wavy>
            </Practice>
          </LetterCell>
          <LetterCell $fill />
          <LetterCell />
        </LetterGrid>
        <PaperText>
          <p>Geplante ambulante Operation bei $[<Wavy>patient_id</Wavy>]$</p>
          <RightLine>$[<Wavy>ort</Wavy>]$, den $[<Wavy>datum</Wavy>]$</RightLine>
          <RedLine>$[x PräOp 1 _ <Wavy>inf</Wavy> JJ NN2N NNNN]$</RedLine>
          <p>OP Termin:$[<Wavy>op_termin_datum</Wavy>]$</p>
          <p>Ort: Ambulantes OP Zentrum</p>
        </PaperText>
      </Paper>
    </Canvas>
  </WriterWindow>
);

export default function App() {
  return (
    <>
      <GlobalStyle />
      <Desktop>
        <Manager />
        <Writer />
        <DialogShadow />
        <CommandList />
      </Desktop>
    </>
  );
}
